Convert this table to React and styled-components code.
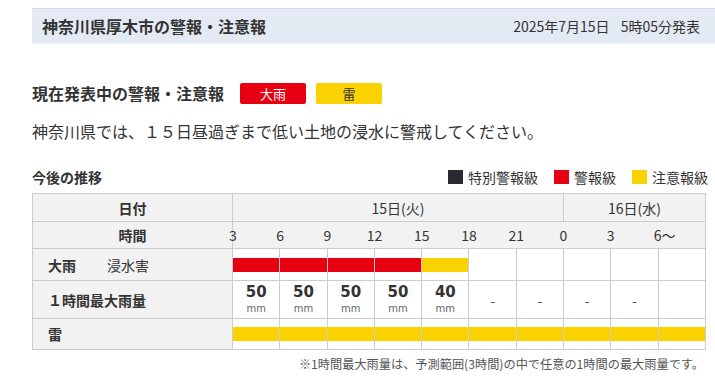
import React from "react";
import styled, { createGlobalStyle } from "styled-components";

const GlobalStyle = createGlobalStyle`
  body {
    margin: 0;
    background: #fff;
    color: #333;
    font-family: "Noto Sans CJK JP", "Noto Sans", sans-serif;
  }
`;

const HOURS = ["3", "6", "9", "12", "15", "18", "21", "0", "3", "6〜"];
const RAIN_BARS = ["red", "red", "red", "red", "yellow", null, null, null, null, null];
const RAIN_AMOUNTS = [50, 50, 50, 50, 40, "-", "-", "-", "-", null];

const COLORS = {
  special: "#2b2a33",
  red: "#e60012",
  yellow: "#fad200",
};

const Page = styled.div`
  padding: 8px 0 0 32px;
`;

const Header = styled.div`
  display: flex;
  align-items: center;
  justify-content: space-between;
  height: 34px;
  padding: 0 15px 0 10px;
  background: #e4eaf4;
  border-top: 1px solid #d2dae6;
  border-bottom: 1px solid #edf1f7;
`;

const Title = styled.h1`
  margin: 0;
  font-size: 16px;
  font-weight: bold;
  color: #333;
`;

const Issued = styled.span`
  font-size: 14px;
  color: #333;
  word-spacing: 8px;
`;

const Current = styled.div`
  display: flex;
  align-items: center;
  margin-top: 37px;
  gap: 10px;
`;

const SectionTitle = styled.h2`
  margin: 0 6px 0 0;
  font-size: 16px;
  font-weight: bold;
`;

const Badge = styled.span`
  display: inline-flex;
  align-items: center;
  justify-content: center;
  width: 66px;
  height: 21px;
  border-radius: 2px;
  font-size: 13px;
  background: ${(p) => COLORS[p.$level]};
  color: ${(p) => (p.$level === "red" ? "#fff" : "#333")};
`;

const Message = styled.p`
  margin: 14px 0 0;
  font-size: 16px;
  line-height: 24px;
`;

const TrendHead = styled.div`
  display: flex;
  align-items: center;
  justify-content: space-between;
  width: 676px;
  margin-top: 22px;
  height: 24px;
`;

const SubTitle = styled.h3`
  margin: 0;
  font-size: 14px;
  font-weight: bold;
`;

const Legend = styled.div`
  display: flex;
  align-items: center;
  gap: 16px;
  font-size: 14px;
`;

const LegendItem = styled.span`
  display: inline-flex;
  align-items: center;
  gap: 5px;
`;

const Swatch = styled.i`
  display: inline-block;
  width: 15px;
  height: 14px;
  background: ${(p) => COLORS[p.$level]};
`;

const Table = styled.div`
  display: grid;
  grid-template-columns: 200px repeat(10, 1fr);
  width: 674px;
  margin-top: 4px;
  border-top: 1px solid #ccc;
  border-left: 1px solid #ccc;
  box-sizing: border-box;
  font-size: 14px;
`;

const Cell = styled.div`
  display: flex;
  align-items: center;
  justify-content: center;
  box-sizing: border-box;
  height: ${(p) => p.$h}px;
  grid-column: span ${(p) => p.$span || 1};
  border-right: 1px solid #ccc;
  border-bottom: 1px solid #ccc;
  background: ${(p) => (p.$grey ? "#f2f2f2" : "#fff")};
  font-weight: ${(p) => (p.$bold ? "bold" : "normal")};
`;

const RowLabel = styled(Cell)`
  justify-content: flex-start;
  padding-left: 15px;
  font-weight: bold;
`;

const Sub = styled.span`
  margin-left: 31px;
  font-weight: normal;
`;

const HourStrip = styled.div`
  display: grid;
  grid-template-columns: repeat(10, 1fr);
  width: 100%;
  height: 100%;
`;

const Hour = styled.span`
  display: flex;
  align-items: center;
  justify-content: flex-start;
  & > span {
    transform: translateX(${(p) => (p.$last ? "-4px" : "-50%")});
  }
`;

const Bar = styled.div`
  width: 100%;
  height: 14px;
  background: ${(p) => (p.$level ? COLORS[p.$level] : "transparent")};
`;

const Amount = styled.div`
  display: flex;
  flex-direction: column;
  align-items: center;
  line-height: 1;
`;

const Value = styled.span`
  font-size: 15px;
  font-weight: bold;
  font-family: "DejaVu Sans", sans-serif;
`;

const Unit = styled.span`
  margin-top: 4px;
  font-size: 10px;
  color: #666;
  font-family: "DejaVu Sans", sans-serif;
`;

const Dash = styled.span`
  color: #555;
`;

const Note = styled.p`
  width: 674px;
  margin: 5px 0 0;
  text-align: right;
  font-size: 12.2px;
  color: #555;
  padding-right: 2px;
  box-sizing: border-box;
`;

export default function App() {
  return (
    <Page>
      <GlobalStyle />
      <Header>
        <Title>神奈川県厚木市の警報・注意報</Title>
        <Issued>2025年7月15日 5時05分発表</Issued>
      </Header>

      <Current>
        <SectionTitle>現在発表中の警報・注意報</SectionTitle>
        <Badge $level="red">大雨</Badge>
        <Badge $level="yellow">雷</Badge>
      </Current>

      <Message>神奈川県では、１５日昼過ぎまで低い土地の浸水に警戒してください。</Message>

      <TrendHead>
        <SubTitle>今後の推移</SubTitle>
        <Legend>
          <LegendItem><Swatch $level="special" />特別警報級</LegendItem>
          <LegendItem><Swatch $level="red" />警報級</LegendItem>
          <LegendItem><Swatch $level="yellow" />注意報級</LegendItem>
        </Legend>
      </TrendHead>

      <Table>
        <Cell $h={28} $grey $bold>日付</Cell>
        <Cell $h={28} $grey $span={7}>15日(火)</Cell>
        <Cell $h={28} $grey $span={3}>16日(水)</Cell>

        <Cell $h={27} $grey $bold>時間</Cell>
        <Cell $h={27} $grey $span={10}>
          <HourStrip>
            {HOURS.map((h, i) => (
              <Hour key={i} $last={i === HOURS.length - 1}>
                <span>{h}</span>
              </Hour>
            ))}
          </HourStrip>
        </Cell>

        <RowLabel $h={32} $grey>
          大雨<Sub>浸水害</Sub>
        </RowLabel>
        {RAIN_BARS.map((lv, i) => (
          <Cell key={i} $h={32}>
            <Bar $level={lv} />
          </Cell>
        ))}

        <RowLabel $h={38} $grey>１時間最大雨量</RowLabel>
        {RAIN_AMOUNTS.map((v, i) => (
          <Cell key={i} $h={38}>
            {typeof v === "number" ? (
              <Amount>
                <Value>{v}</Value>
                <Unit>mm</Unit>
              </Amount>
            ) : (
              v && <Dash>{v}</Dash>
            )}
          </Cell>
        ))}

        <RowLabel $h={31} $grey>雷</RowLabel>
        {HOURS.map((_, i) => (
          <Cell key={i} $h={31}>
            <Bar $level="yellow" />
          </Cell>
        ))}
      </Table>

      <Note>※1時間最大雨量は、予測範囲(3時間)の中で任意の1時間の最大雨量です。</Note>
    </Page>
  );
}
